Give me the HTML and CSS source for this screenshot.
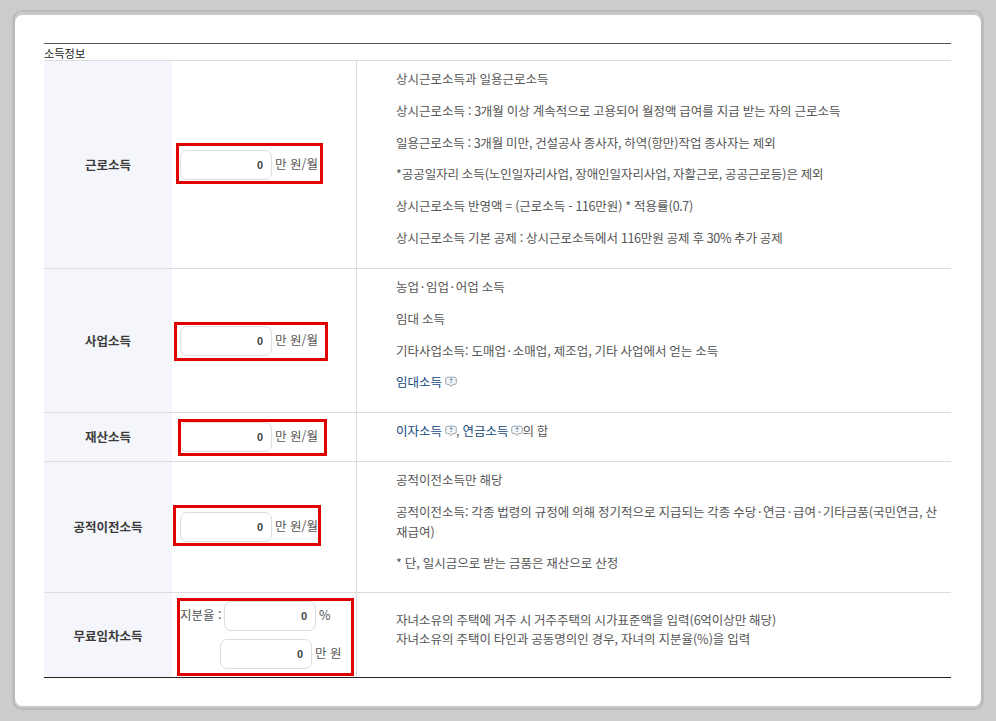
FILE: index.html
```html
<!DOCTYPE html>
<html lang="ko">
<head>
<meta charset="utf-8">
<title>소득정보</title>
<link rel="stylesheet" href="styles.css">
</head>
<body>
<svg class="defs" width="0" height="0" aria-hidden="true">
  <symbol id="help" viewBox="0 0 12 12">
    <path d="M2.6 1.2h6.8a1.9 1.9 0 0 1 1.9 1.9v3.6a1.9 1.9 0 0 1-1.9 1.9H7.6L6 10.6 4.4 8.6H2.6A1.9 1.9 0 0 1 .7 6.7V3.1a1.9 1.9 0 0 1 1.9-1.9z" fill="#f3f5f7" stroke="#9aa5ae" stroke-width="1"/>
    <path d="M5 3.7c0-.5.4-.8 1-.8s1 .3 1 .8c0 .7-1 .8-1 1.5" fill="none" stroke="#2f6590" stroke-width=".9"/>
    <circle cx="6" cy="6.5" r=".55" fill="#2f6590"/>
  </symbol>
</svg>
<main class="card">
  <section class="sheet">
    <h2 class="caption">소득정보</h2>
    <div class="row row-a">
      <div class="label">근로소득</div>
      <div class="field">
        <input class="num" value="0" readonly><span class="unit">만 원/월</span>
        <span class="mark mark-a"></span>
      </div>
      <div class="desc">
        <p>상시근로소득과 일용근로소득</p>
        <p>상시근로소득 : <span class="n">3</span>개월 이상 계속적으로 고용되어 월정액 급여를 지급 받는 자의 근로소득</p>
        <p class="tight">일용근로소득 : <span class="n">3</span>개월 미만, 건설공사 종사자, 하역(항만)작업 종사자는 제외</p>
        <p class="tight">*공공일자리 소득(노인일자리사업, 장애인일자리사업, 자활근로, 공공근로등)은 제외</p>
        <p>상시근로소득 반영액 = (근로소득 - <span class="n">116</span>만원) * 적용률(<span class="n">0.7</span>)</p>
        <p>상시근로소득 기본 공제 : 상시근로소득에서 <span class="n">116</span>만원 공제 후 <span class="n">30%</span> 추가 공제</p>
      </div>
    </div>
    <div class="row row-b">
      <div class="label">사업소득</div>
      <div class="field">
        <input class="num" value="0" readonly><span class="unit">만 원/월</span>
        <span class="mark mark-b"></span>
      </div>
      <div class="desc">
        <p>농업<span class="dot">·</span>임업<span class="dot">·</span>어업 소득</p>
        <p>임대 소득</p>
        <p>기타사업소득: 도매업<span class="dot">·</span>소매업, 제조업, 기타 사업에서 얻는 소득</p>
        <p><a class="term">임대소득</a><svg class="help"><use href="#help"/></svg></p>
      </div>
    </div>
    <div class="row row-c">
      <div class="label label-up">재산소득</div>
      <div class="field">
        <input class="num" value="0" readonly><span class="unit">만 원/월</span>
        <span class="mark mark-c"></span>
      </div>
      <div class="desc">
        <p><a class="term">이자소득</a><svg class="help"><use href="#help"/></svg>, <a class="term">연금소득</a><svg class="help"><use href="#help"/></svg>의 합</p>
      </div>
    </div>
    <div class="row row-d">
      <div class="label label-up">공적이전소득</div>
      <div class="field">
        <input class="num" value="0" readonly><span class="unit">만 원/월</span>
        <span class="mark mark-d"></span>
      </div>
      <div class="desc">
        <p>공적이전소득만 해당</p>
        <p>공적이전소득: 각종 법령의 규정에 의해 정기적으로 지급되는 각종 수당<span class="dot">·</span>연금<span class="dot">·</span>급여<span class="dot">·</span>기타금품(국민연금, 산<br>재급여)</p>
        <p>* 단, 일시금으로 받는 금품은 재산으로 산정</p>
      </div>
    </div>
    <div class="row row-e">
      <div class="label">무료임차소득</div>
      <div class="field field-stack">
        <div class="line line-top"><span class="unit-left">지분율 :</span><input class="num" value="0" readonly><span class="unit">%</span></div>
        <div class="line line-bottom"><input class="num" value="0" readonly><span class="unit">만 원</span></div>
        <span class="mark mark-e"></span>
      </div>
      <div class="desc desc-tight">
        <p>자녀소유의 주택에 거주 시 거주주택의 시가표준액을 입력(<span class="n">6</span>억이상만 해당)</p>
        <p>자녀소유의 주택이 타인과 공동명의인 경우, 자녀의 지분율(%)을 입력</p>
      </div>
    </div>
  </section>
</main>
</body>
</html>
```
FILE: styles.css
```css
* { box-sizing: border-box; }
html, body { margin: 0; height: 100%; }
body {
  background: #cccccc;
  padding: 10px 12px 0;
  font-family: "Noto Sans CJK KR", "Noto Sans", sans-serif;
  font-size: 12.5px;
  color: #555;
}
.defs { position: absolute; }
.card {
  width: 972px;
  height: 700px;
  background: #fff;
  border-style: solid;
  border-color: #bbb;
  border-width: 2px 3px;
  border-radius: 10px;
  padding: 31px 0 0 29px;
  box-shadow: inset 0 3px 0 #c8c8c8, inset 0 -2px 0 #c8c8c8;
}
.sheet {
  border-top: 1px solid #555;
  border-bottom: 1px solid #222;
  width: 907px;
}
.caption {
  margin: 0;
  height: 17px;
  font-size: 11.2px;
  font-weight: 400;
  line-height: 18px;
  color: #222;
  border-bottom: 1px solid #ddd;
}
.row {
  display: grid;
  grid-template-columns: 128px 185px 1fr;
  border-bottom: 1px solid #ddd;
}
.row-a { height: 208px; }
.row-b { height: 144px; }
.row-c { height: 49px; }
.row-d { height: 131px; }
.row-e { height: 84px; border-bottom: 0; }
.label {
  display: flex;
  align-items: center;
  justify-content: center;
  background: #f4f6fb;
  font-weight: 700;
  color: #3a3a3a;
}
.label-up { padding-bottom: 2px; }
.field {
  position: relative;
  display: flex;
  align-items: center;
  padding-left: 8px;
  border-right: 1px solid #ddd;
}
.field-stack { display: block; padding: 0; }
.line { display: flex; align-items: center; height: 30px; }
.line-top { margin: 8px 0 0 8px; }
.line-bottom { margin: 8px 0 0 48px; }
.num {
  width: 92px;
  height: 30px;
  padding: 0 8px;
  border: 1px solid #ddd;
  border-radius: 7px;
  background: #fff;
  text-align: right;
  font: 700 11px "Liberation Sans", sans-serif;
  color: #444;
  outline: 0;
}
.unit { margin-left: 3px; padding-bottom: 3px; white-space: nowrap; }
.unit-left { width: 44px; padding-bottom: 3px; white-space: nowrap; }
.mark { position: absolute; border: 3px solid #e00000; pointer-events: none; }
.mark-a { left: 4px; top: 82px; width: 147px; height: 41px; }
.mark-b { left: 2px; top: 53px; width: 154px; height: 39px; }
.mark-c { left: 6px; top: 6px; width: 149px; height: 37px; }
.mark-d { left: 1px; top: 43px; width: 148px; height: 41px; }
.mark-e { left: 5px; top: 5px; width: 177px; height: 78px; }
.desc { padding: 8px 10px 0 39px; word-spacing: -0.6px; }
.desc p { margin: 0 0 12px; line-height: 19.8px; }
.desc-tight { padding-top: 17px; }
.desc-tight p { margin: 0; line-height: 19px; }
.n { letter-spacing: -0.4px; }
.dot { margin: 0 1.7px; }
.tight { letter-spacing: -0.06px; }
.term { color: #164a7e; }
.help { width: 12px; height: 12px; margin: 0 -1px 0 3px; vertical-align: -1px; }
```
